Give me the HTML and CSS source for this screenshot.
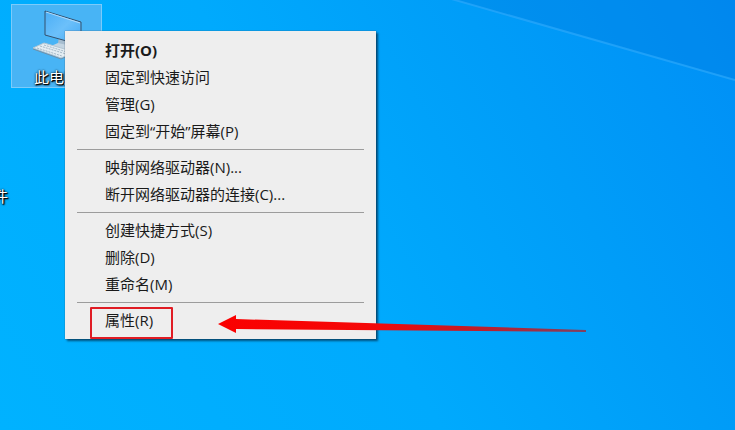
FILE: index.html
```html
<!DOCTYPE html>
<html lang="zh-CN">
<head>
  <meta charset="UTF-8">
  <meta name="viewport" content="width=device-width, initial-scale=1.0">
  <title>桌面</title>
  <link rel="stylesheet" href="styles.css">
</head>
<body>
  <main class="desktop">
    <svg class="light-beam" viewBox="0 0 735 430" preserveAspectRatio="none" aria-hidden="true">
      <polygon points="448,-2 735,-2 735,80" fill="#0078dc" fill-opacity="0.3"/>
      <path d="M448 -2 L735 80" stroke="#2ba8fb" stroke-width="2" stroke-opacity="0.7" fill="none"/>
    </svg>

    <button type="button" class="desktop-icon computer">
      <svg class="computer-image" viewBox="0 0 60 54" aria-hidden="true">
        <defs>
          <linearGradient id="screen" x1="0" y1="0" x2="1" y2="1">
            <stop offset="0" stop-color="#4aaef6"/>
            <stop offset="0.5" stop-color="#6cc0fa"/>
            <stop offset="1" stop-color="#3ea8f7"/>
          </linearGradient>
        </defs>
        <path d="M24 37 L38 31 L50 36 L36 43 Z" fill="#c4d5e2"/>
        <path d="M32 28 L40 30 L40 36 L31 34 Z" fill="#a6bdcf"/>
        <path d="M18 2 L54 13 L54 36 L18 26 Z" fill="url(#screen)" stroke="#34506c" stroke-width="1"/>
        <path d="M19 3 L53 14" stroke="#b0dafa" stroke-width="1"/>
        <path d="M6 39 L17 34 L48 43 L34 49 Z" fill="#e3edf3" stroke="#b3c6d3" stroke-width="1"/>
        <path d="M10 39 L35 47 M13 37 L39 45 M17 36 L43 44" stroke="#a4b8c6" stroke-width="1" stroke-dasharray="2 1"/>
        <path d="M6 40 L34 50 L48 44" fill="none" stroke="#6e91aa" stroke-width="1"/>
      </svg>
      <span class="icon-label">此电脑</span>
    </button>

    <button type="button" class="desktop-icon file">
      <span class="icon-label">件</span>
    </button>

    <div class="context-menu" role="menu">
      <button type="button" role="menuitem" class="menu-item default">打开(O)</button>
      <button type="button" role="menuitem" class="menu-item">固定到快速访问</button>
      <button type="button" role="menuitem" class="menu-item">管理(G)</button>
      <button type="button" role="menuitem" class="menu-item">固定到“开始”屏幕(P)</button>
      <hr class="separator">
      <button type="button" role="menuitem" class="menu-item">映射网络驱动器(N)...</button>
      <button type="button" role="menuitem" class="menu-item">断开网络驱动器的连接(C)...</button>
      <hr class="separator">
      <button type="button" role="menuitem" class="menu-item">创建快捷方式(S)</button>
      <button type="button" role="menuitem" class="menu-item">删除(D)</button>
      <button type="button" role="menuitem" class="menu-item">重命名(M)</button>
      <hr class="separator">
      <button type="button" role="menuitem" class="menu-item">属性(R)</button>
    </div>

    <!-- marks on top of the menu -->
    <div class="highlight"></div>
    <svg class="arrow" viewBox="0 0 370 20" aria-hidden="true">
      <defs>
        <linearGradient id="arrow-fill" x1="0" y1="0" x2="1" y2="0">
          <stop offset="0" stop-color="#fa0000"/>
          <stop offset="0.4" stop-color="#f50808"/>
          <stop offset="0.65" stop-color="#cc1720"/>
          <stop offset="1" stop-color="#804060"/>
        </linearGradient>
      </defs>
      <path d="M1 10 L19 1 L19 5 L369 16 L369 18 L19 15 L19 19 Z" fill="url(#arrow-fill)"/>
    </svg>
  </main>
</body>
</html>
```
FILE: styles.css
```css
* {
  box-sizing: border-box;
}
body {
  margin: 0;
  font-family: "Open Sans", "Noto Sans CJK SC", sans-serif;
  font-size: 15px;
}
button {
  margin: 0;
  border: none;
  background: none;
  font: inherit;
}
.desktop {
  position: relative;
  min-height: 100vh;
  overflow: hidden;
  background: linear-gradient(60deg, #00b2ff 0%, #00aafd 45%, #009df8 72%, #008ff6 100%);
}
.light-beam {
  position: absolute;
  top: 0;
  left: 0;
  width: 100%;
  height: 100%;
}

/* desktop icons */
.desktop-icon {
  position: absolute;
  display: flex;
  flex-direction: column;
  align-items: center;
  gap: 4px;
  padding: 4px 0 0;
}
.computer {
  top: 4px;
  left: 11px;
  width: 91px;
  border: 1px solid #7bcbfa;
  background-color: #48b4f5;
}
.computer-image {
  width: 64px;
  height: 54px;
}
.file {
  top: 182px;
  left: -7px;
}
.icon-label {
  color: #fff;
  font-size: 15px;
  line-height: 20px;
  text-shadow: 1px 1px 2px #000, 1px 1px 1px #000, 0 0 2px #000;
}

/* context menu */
.context-menu {
  position: absolute;
  top: 31px;
  left: 65px;
  display: flex;
  flex-direction: column;
  width: 311px;
  padding: 6px 0 5px;
  background-color: #eee;
  box-shadow: 2px 2px 2px rgba(0, 40, 70, 0.7), 0 0 1px #456;
}
.menu-item {
  padding: 0 40px;
  color: #1a1a1a;
  line-height: 27px;
  text-align: left;
  white-space: nowrap;
}
.menu-item:hover {
  background-color: #fff;
}
.default {
  font-weight: bold;
}
.separator {
  align-self: stretch;
  height: 1px;
  margin: 4px 12px;
  border: none;
  background-color: #9c9c9c;
}

.highlight {
  position: absolute;
  top: 307px;
  left: 90px;
  width: 83px;
  height: 32px;
  border: 2px solid #e01c24;
  border-radius: 1px;
}
.arrow {
  position: absolute;
  top: 314px;
  left: 217px;
  width: 370px;
  height: 20px;
}
```
